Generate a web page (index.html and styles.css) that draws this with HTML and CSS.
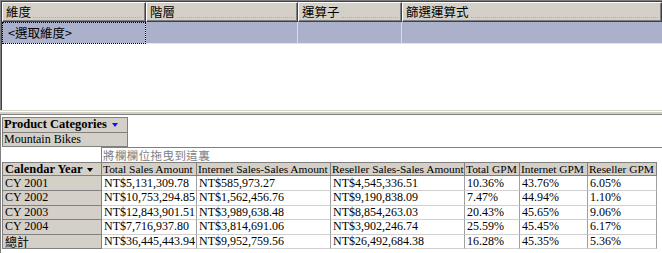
FILE: index.html
```html
<!DOCTYPE html>
<html lang="zh-Hant">
<head>
<meta charset="utf-8">
<title>Cube Browser</title>
<link rel="stylesheet" href="styles.css">
</head>
<body>
<div class="app">
  <div class="filter-outer">
    <div class="filter">
      <div class="fgrid">
        <div class="fhead"><span class="ht">維度</span><span class="leader"></span></div>
        <div class="fhead"><span class="ht">階層</span><span class="leader"></span></div>
        <div class="fhead"><span class="ht">運算子</span><span class="leader"></span></div>
        <div class="fhead"><span class="ht">篩選運算式</span><span class="leader"></span></div>
        <div class="fcell focus">&lt;選取維度&gt;</div>
        <div class="fcell"></div>
        <div class="fcell"></div>
        <div class="fcell last"></div>
      </div>
    </div>
  </div>
  <div class="splitter"></div>
  <div class="pivot">
    <div class="pfilter">
      <div class="pf-head"><span class="bold">Product Categories</span><span class="tri blue"></span></div>
      <div class="pf-val">Mountain Bikes</div>
    </div>
    <div class="droprow">
      <div class="drop"><span class="droptext">將欄欄位拖曳到這裏</span></div>
    </div>
    <div class="ptable">
      <div class="c rh hdr"><span class="bold">Calendar Year</span><span class="tri"></span></div>
      <div class="c ch">Total Sales Amount</div>
      <div class="c ch">Internet Sales-Sales Amount</div>
      <div class="c ch">Reseller Sales-Sales Amount</div>
      <div class="c ch">Total GPM</div>
      <div class="c ch">Internet GPM</div>
      <div class="c ch">Reseller GPM</div>

      <div class="c rh">CY 2001</div>
      <div class="c d">NT$5,131,309.78</div>
      <div class="c d">NT$585,973.27</div>
      <div class="c d">NT$4,545,336.51</div>
      <div class="c d">10.36%</div>
      <div class="c d">43.76%</div>
      <div class="c d">6.05%</div>

      <div class="c rh">CY 2002</div>
      <div class="c d">NT$10,753,294.85</div>
      <div class="c d">NT$1,562,456.76</div>
      <div class="c d">NT$9,190,838.09</div>
      <div class="c d">7.47%</div>
      <div class="c d">44.94%</div>
      <div class="c d">1.10%</div>

      <div class="c rh">CY 2003</div>
      <div class="c d">NT$12,843,901.51</div>
      <div class="c d">NT$3,989,638.48</div>
      <div class="c d">NT$8,854,263.03</div>
      <div class="c d">20.43%</div>
      <div class="c d">45.65%</div>
      <div class="c d">9.06%</div>

      <div class="c rh">CY 2004</div>
      <div class="c d">NT$7,716,937.80</div>
      <div class="c d">NT$3,814,691.06</div>
      <div class="c d">NT$3,902,246.74</div>
      <div class="c d">25.59%</div>
      <div class="c d">45.45%</div>
      <div class="c d">6.17%</div>

      <div class="c rh cjk">總計</div>
      <div class="c d">NT$36,445,443.94</div>
      <div class="c d">NT$9,952,759.56</div>
      <div class="c d">NT$26,492,684.38</div>
      <div class="c d">16.28%</div>
      <div class="c d">45.35%</div>
      <div class="c d">5.36%</div>
    </div>
  </div>
</div>
</body>
</html>
```
FILE: styles.css
```css
html, body {
  margin: 0;
  padding: 0;
  background: #ffffff;
}
.app {
  width: 662px;
  height: 253px;
  overflow: hidden;
  font-family: "Noto Sans CJK TC", sans-serif;
  font-size: 12px;
  color: #000;
}
.filter-outer {
  height: 110px;
  box-sizing: border-box;
  border-top: 1px solid #808080;
  border-left: 1px solid #808080;
}
.filter {
  height: 109px;
  box-sizing: border-box;
  border-top: 1px solid #404040;
  border-left: 1px solid #404040;
}
.fgrid {
  display: grid;
  grid-template-columns: 144px 152px 104px 1fr;
  grid-template-rows: 20px 22px;
}
.fhead {
  display: flex;
  align-items: center;
  box-sizing: border-box;
  background: #d4d0c8;
  border-top: 1px solid #ffffff;
  border-left: 1px solid #ffffff;
  border-right: 1px solid #404040;
  border-bottom: 1px solid #404040;
  box-shadow: inset -1px -1px 0 #808080;
  padding-left: 3px;
  line-height: 14px;
  font-size: 12.5px;
}
.ht {
  white-space: nowrap;
}
.leader {
  flex: 1;
  align-self: flex-end;
  margin: 0 3px 3px 2px;
  border-bottom: 1px dotted #a4acd0;
}
.fcell {
  background: #abb0cb;
  box-sizing: border-box;
  border-right: 1px solid #d8dce8;
  border-bottom: 1px solid #e4e4e4;
  display: flex;
  align-items: center;
  padding-left: 6px;
  font-size: 12.5px;
}
.fcell.last {
  border-right: none;
}
.fcell.focus {
  outline: 1px dotted #000;
  outline-offset: -1px;
}
.splitter {
  height: 5px;
  box-sizing: border-box;
  border-top: 1px solid #d4d0c8;
  border-bottom: 1px solid #808080;
  box-shadow: inset 0 -2px 0 #d4d0c8;
  background: #ffffff;
}
.pivot {
  height: 138px;
  box-sizing: border-box;
  border-left: 1px solid #808080;
  padding: 2px 0 0 1px;
  font-family: "Liberation Serif", "Noto Sans CJK TC", serif;
  font-size: 12px;
}
.pfilter {
  width: 126px;
  box-sizing: border-box;
  border-top: 1px solid #808080;
  border-left: 1px solid #808080;
  border-right: 1px solid #808080;
  background: #d4d0c8;
}
.pf-head, .pf-val {
  height: 14.6px;
  box-sizing: border-box;
  border-bottom: 1px solid #808080;
  display: flex;
  align-items: center;
  padding-left: 1px;
  line-height: 13px;
  white-space: nowrap;
}
.bold {
  font-weight: bold;
  font-size: 12.5px;
}
.tri {
  width: 0;
  height: 0;
  border-left: 3.5px solid transparent;
  border-right: 3.5px solid transparent;
  border-top: 4px solid #000;
  margin-left: 5px;
  margin-top: 1px;
}
.tri.blue {
  border-top-color: #1010ff;
}
.droprow {
  height: 14.6px;
  padding-left: 99px;
}
.drop {
  height: 100%;
  box-sizing: border-box;
  border-top: 1px solid #808080;
  border-left: 1px solid #808080;
  color: #808080;
  font-family: "Noto Sans CJK TC", sans-serif;
  font-size: 11.5px;
  padding-left: 1px;
  white-space: nowrap;
  display: flex;
  align-items: center;
}
.droptext {
  line-height: 12px;
  letter-spacing: 0.4px;
}
.ptable {
  display: grid;
  grid-template-columns: 100px 95px 134px 134px 55px 68px 69px;
  grid-auto-rows: 14.6px;
  width: 555px;
}
.c {
  box-sizing: border-box;
  display: flex;
  align-items: center;
  padding-left: 2px;
  white-space: nowrap;
  overflow: hidden;
  line-height: 13px;
}
.ch {
  background: #d4d0c8;
  border-top: 1px solid #808080;
  border-right: 1px solid #808080;
  border-bottom: 1px solid #808080;
  font-size: 11.4px;
  padding-left: 1px;
}
.rh {
  background: #d4d0c8;
  border-left: 1px solid #808080;
  border-right: 1px solid #808080;
  border-bottom: 1px solid #808080;
}
.rh.hdr {
  border-top: 1px solid #808080;
}
.cjk {
  font-family: "Noto Sans CJK TC", sans-serif;
  font-size: 12px;
  line-height: 12px;
  overflow: visible;
}
.d {
  background: #ffffff;
  border-right: 1px solid #a0a0a0;
  border-bottom: 1px solid #d0d0d0;
}
```
